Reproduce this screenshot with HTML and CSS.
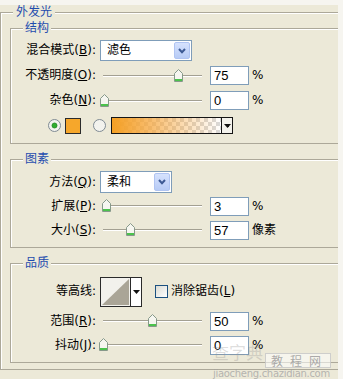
FILE: index.html
```html
<!DOCTYPE html>
<html lang="zh">
<head>
<meta charset="utf-8">
<link rel="stylesheet" href="styles.css">
</head>
<body>
<div class="panel">
  <fieldset class="outer">
    <legend>外发光</legend>

    <fieldset class="grp grp-struct">
      <legend>结构</legend>
      <div class="row">
        <span class="lbl">混合模式(<u>B</u>):</span>
        <div class="select w-blend"><span>滤色</span><span class="dd"><svg width="8" height="6" viewBox="0 0 8 6"><polyline points="1,1 4,4.2 7,1" fill="none" stroke="#3d5a94" stroke-width="2"/></svg></span></div>
      </div>
      <div class="row">
        <span class="lbl">不透明度(<u>O</u>):</span>
        <div class="track"><svg class="thumb" style="left:71px" width="9" height="13" viewBox="0 0 9 13"><path d="M0.5 4.5 L4.5 0.5 L8.5 4.5 V12.5 H0.5 Z" fill="#f6f6f0" stroke="#86998a"/><rect x="1" y="10" width="7" height="2" fill="#4cc24c"/></svg></div>
        <input class="num" type="text" value="75" readonly>
        <span class="unit">%</span>
      </div>
      <div class="row">
        <span class="lbl">杂色(<u>N</u>):</span>
        <div class="track"><svg class="thumb" style="left:-3px" width="9" height="13" viewBox="0 0 9 13"><path d="M0.5 4.5 L4.5 0.5 L8.5 4.5 V12.5 H0.5 Z" fill="#f6f6f0" stroke="#86998a"/><rect x="1" y="10" width="7" height="2" fill="#4cc24c"/></svg></div>
        <input class="num" type="text" value="0" readonly>
        <span class="unit">%</span>
      </div>
      <div class="row row-color">
        <svg class="radio" width="13" height="13" viewBox="0 0 13 13"><circle cx="6.5" cy="6.5" r="6" fill="#f3f3ee" stroke="#7f8a93"/><circle cx="6.5" cy="6.5" r="2.5" fill="#2fae2f" stroke="#1f861f" stroke-width="0.8"/></svg>
        <span class="swatch"></span>
        <svg class="radio radio2" width="13" height="13" viewBox="0 0 13 13"><circle cx="6.5" cy="6.5" r="6" fill="#f3f3ee" stroke="#7f8a93"/></svg>
        <div class="gradient"><span class="grad-fill"></span><span class="grad-arrow"><svg width="7" height="4" viewBox="0 0 7 4"><polygon points="0,0 7,0 3.5,4" fill="#111"/></svg></span></div>
      </div>
    </fieldset>

    <fieldset class="grp grp-elem">
      <legend>图素</legend>
      <div class="row">
        <span class="lbl">方法(<u>Q</u>):</span>
        <div class="select w-method"><span>柔和</span><span class="dd"><svg width="8" height="6" viewBox="0 0 8 6"><polyline points="1,1 4,4.2 7,1" fill="none" stroke="#3d5a94" stroke-width="2"/></svg></span></div>
      </div>
      <div class="row">
        <span class="lbl">扩展(<u>P</u>):</span>
        <div class="track"><svg class="thumb" style="left:-1px" width="9" height="13" viewBox="0 0 9 13"><path d="M0.5 4.5 L4.5 0.5 L8.5 4.5 V12.5 H0.5 Z" fill="#f6f6f0" stroke="#86998a"/><rect x="1" y="10" width="7" height="2" fill="#4cc24c"/></svg></div>
        <input class="num" type="text" value="3" readonly>
        <span class="unit">%</span>
      </div>
      <div class="row">
        <span class="lbl">大小(<u>S</u>):</span>
        <div class="track"><svg class="thumb" style="left:23px" width="9" height="13" viewBox="0 0 9 13"><path d="M0.5 4.5 L4.5 0.5 L8.5 4.5 V12.5 H0.5 Z" fill="#f6f6f0" stroke="#86998a"/><rect x="1" y="10" width="7" height="2" fill="#4cc24c"/></svg></div>
        <input class="num" type="text" value="57" readonly>
        <span class="unit">像素</span>
      </div>
    </fieldset>

    <fieldset class="grp grp-quality">
      <legend>品质</legend>
      <div class="row row-tall">
        <span class="lbl">等高线:</span>
        <div class="contour">
          <span class="contour-preview"><svg width="29" height="28" viewBox="0 0 29 28"><polygon points="1,27 28,1 28,27" fill="#aaa597"/></svg></span>
          <span class="contour-arrow"><svg width="7" height="4" viewBox="0 0 7 4"><polygon points="0,0 7,0 3.5,4" fill="#111"/></svg></span>
        </div>
        <span class="check"></span>
        <span class="check-label">消除锯齿(<u>L</u>)</span>
      </div>
      <div class="row">
        <span class="lbl">范围(<u>R</u>):</span>
        <div class="track"><svg class="thumb" style="left:45px" width="9" height="13" viewBox="0 0 9 13"><path d="M0.5 4.5 L4.5 0.5 L8.5 4.5 V12.5 H0.5 Z" fill="#f6f6f0" stroke="#86998a"/><rect x="1" y="10" width="7" height="2" fill="#4cc24c"/></svg></div>
        <input class="num" type="text" value="50" readonly>
        <span class="unit">%</span>
      </div>
      <div class="row">
        <span class="lbl">抖动(<u>J</u>):</span>
        <div class="track"><svg class="thumb" style="left:-4px" width="9" height="13" viewBox="0 0 9 13"><path d="M0.5 4.5 L4.5 0.5 L8.5 4.5 V12.5 H0.5 Z" fill="#f6f6f0" stroke="#86998a"/><rect x="1" y="10" width="7" height="2" fill="#4cc24c"/></svg></div>
        <input class="num" type="text" value="0" readonly>
        <span class="unit">%</span>
      </div>
    </fieldset>
  </fieldset>

  <div class="watermark">
    <span class="wm-a">查字典</span>
    <span class="wm-b">教程网</span>
    <span class="wm-c">jiaocheng.chazidian.com</span>
  </div>
</div>
</body>
</html>
```

FILE: styles.css
```css
* { box-sizing: border-box; }

body {
  margin: 0;
  background: #f6f5f0;
  font-family: "DejaVu Sans", "Noto Sans CJK SC", sans-serif;
  font-size: 12px;
  line-height: 15px;
  color: #000;
}

.panel {
  position: relative;
  width: 338px;
  height: 374px;
  margin-top: 5px;
  background: #ece9d8;
  overflow: hidden;
}

fieldset {
  margin: 0;
  padding: 0;
  min-width: 0;
  border: 1px solid #aca899;
  box-shadow: inset 1px 1px 0 #fff;
}

legend {
  margin-left: 12px;
  padding: 0 3px;
  font-size: 12px;
  line-height: 15px;
  color: #1f4cae;
  background: #ece9d8;
}

.outer {
  width: 360px;
}

.grp {
  margin: 1px 8px 0 9px;
}
.grp legend { padding: 0 2px; }

.grp-struct { padding: 2px 0 5px; }
.grp-elem { margin-top: 8px; padding: 3px 0 5px; }
.grp-quality { margin-top: 8px; margin-bottom: 6px; padding: 3px 0 5px; }

.row {
  display: flex;
  align-items: center;
  height: 24px;
}
.grp-struct .row { height: 25px; }
.row-tall { height: 35px; }

.lbl {
  flex: none;
  width: 85px;
  text-align: right;
  white-space: nowrap;
}

u { text-decoration: underline; text-underline-offset: 1px; }

/* combo box */
.select {
  flex: none;
  display: flex;
  align-items: center;
  justify-content: space-between;
  margin-left: 4px;
  padding-left: 6px;
  border: 1px solid #7f9db9;
  background: #fff;
}
.w-blend { width: 92px; height: 21px; }
.w-method { width: 72px; height: 22px; }
.dd {
  display: flex;
  align-items: center;
  justify-content: center;
  width: 16px;
  height: calc(100% - 2px);
  margin-right: 1px;
  border: 1px solid #b0c4f2;
  border-radius: 2px;
  background: linear-gradient(#d6e2fd, #b7cbf6);
}

/* slider */
.track {
  position: relative;
  flex: none;
  width: 99px;
  height: 2px;
  margin-left: 7px;
  border-top: 1px solid #a3a092;
  border-bottom: 1px solid #fff;
}
.thumb {
  position: absolute;
  top: -7px;
  display: block;
}

/* number field */
.num {
  flex: none;
  width: 39px;
  height: 19px;
  margin: 0 0 0 8px;
  padding: 0 3px;
  border: 1px solid #7f9db9;
  background: #fff;
  font-family: "Liberation Sans", Arial, sans-serif;
  font-size: 13px;
  line-height: 17px;
  color: #000;
  outline: none;
}
.unit { margin-left: 3px; }

/* color row */
.row-color { padding-left: 37px; }
.radio { flex: none; display: block; }
.swatch {
  flex: none;
  width: 16px;
  height: 16px;
  margin-left: 4px;
  background: #f6a72b;
  border: 1px solid #2b2b2b;
}
.radio2 { margin-left: 12px; }
.gradient {
  flex: none;
  display: flex;
  width: 122px;
  height: 17px;
  margin-left: 5px;
  border: 1px solid #151515;
}
.grad-fill {
  flex: 1;
  background:
    linear-gradient(to right, #f5a024 0%, rgba(246, 166, 60, 0.75) 35%, rgba(246, 170, 80, 0) 100%),
    repeating-conic-gradient(#d9d9d9 0 25%, #ffffff 0 50%) 0 0 / 8px 8px;
}
.grad-arrow {
  display: flex;
  align-items: center;
  justify-content: center;
  width: 11px;
  border-left: 1px solid #151515;
  background: #f3f2ec;
}

/* contour */
.contour {
  flex: none;
  display: flex;
  width: 42px;
  height: 30px;
  margin-left: 4px;
  border: 1px solid #2a2a2a;
}
.contour-preview {
  display: block;
  width: 29px;
  background: #f2f1ec;
}
.contour-preview svg { display: block; }
.contour-arrow {
  display: flex;
  align-items: center;
  justify-content: center;
  flex: 1;
  border-left: 1px solid #2a2a2a;
  background: #fff;
}

.check {
  flex: none;
  width: 13px;
  height: 13px;
  margin-left: 13px;
  border: 1px solid #1c5180;
  background: linear-gradient(135deg, #dcdcd4, #fff);
}
.check-label { margin-left: 3px; white-space: nowrap; }

/* watermark overlay */
.watermark {
  position: absolute;
  left: 212px;
  top: 333px;
  width: 126px;
  height: 41px;
  pointer-events: none;
  white-space: nowrap;
}
.wm-a {
  position: absolute;
  left: 0;
  top: 4px;
  font-size: 17px;
  line-height: 20px;
  color: rgba(140, 140, 140, 0.3);
  font-family: "Noto Sans CJK SC", sans-serif;
}
.wm-b {
  position: absolute;
  left: 53px;
  top: 15px;
  width: 66px;
  height: 15px;
  font-size: 12px;
  line-height: 13px;
  letter-spacing: 7px;
  padding-left: 5px;
  color: rgba(150, 150, 150, 0.8);
  background: rgba(255, 255, 255, 0.55);
  border: 1px solid rgba(190, 190, 190, 0.7);
  font-family: "Noto Sans CJK SC", sans-serif;
  white-space: nowrap;
  overflow: hidden;
}
.wm-c {
  position: absolute;
  left: 1px;
  top: 30px;
  font-size: 10px;
  line-height: 11px;
  color: rgba(160, 160, 160, 0.75);
  font-family: "DejaVu Sans", sans-serif;
  letter-spacing: -0.3px;
}
```
